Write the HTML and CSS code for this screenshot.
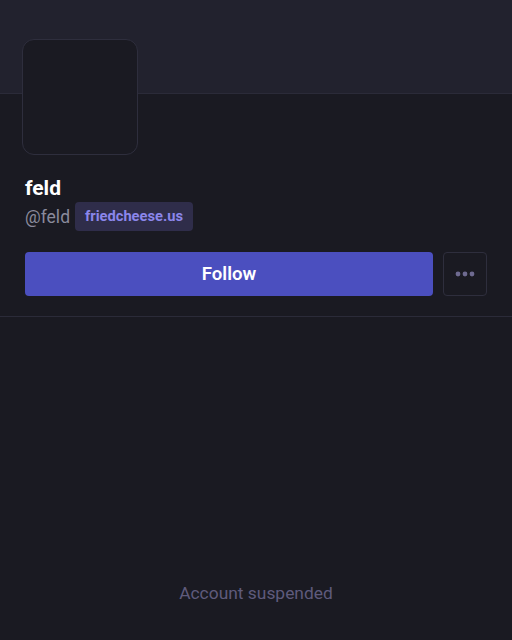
FILE: index.html
```html
<!DOCTYPE html>
<html>
<head>
<meta charset="utf-8">
<link rel="stylesheet" href="styles.css">
</head>
<body>
<div class="banner"></div>
<section class="profile">
  <div class="avatar"></div>
  <h1 class="name">feld</h1>
  <div class="handle-row">
    <span class="handle">@feld</span>
    <span class="badge">friedcheese.us</span>
  </div>
  <div class="actions">
    <button class="follow">Follow</button>
    <button class="more" aria-label="More">
      <svg width="20" height="6" viewBox="0 0 20 6"><circle cx="3" cy="3" r="2.4"/><circle cx="10" cy="3" r="2.4"/><circle cx="17" cy="3" r="2.4"/></svg>
    </button>
  </div>
</section>
<div class="suspended">Account suspended</div>
</body>
</html>
```
FILE: styles.css
```css
html, body {
  margin: 0;
  padding: 0;
  background: #1a1a22;
  font-family: Roboto, "Liberation Sans", sans-serif;
}
.banner {
  height: 93px;
  background: #22222e;
  border-bottom: 1px solid #2b2b39;
}
.profile {
  padding: 0 25px 20px 25px;
  border-bottom: 1px solid #2b2b39;
}
.avatar {
  width: 114px;
  height: 114px;
  margin-top: -55px;
  margin-left: -3px;
  border: 1px solid #2e2e3d;
  border-radius: 12px;
  background: #1a1a22;
}
.name {
  margin: 21px 0 0 0;
  font-size: 21px;
  line-height: 25px;
  font-weight: 700;
  color: #ffffff;
}
.handle-row {
  display: flex;
  align-items: center;
  gap: 5px;
  margin-top: 1px;
}
.handle {
  font-size: 17.5px;
  color: #8a8a9c;
}
.badge {
  background: #2f2d4a;
  color: #8b86ea;
  font-size: 14.7px;
  font-weight: 700;
  padding: 6px 10px;
  line-height: 17px;
  border-radius: 4px;
}
.actions {
  display: flex;
  gap: 10px;
  margin-top: 21px;
}
.follow {
  flex: 1;
  height: 44px;
  border: none;
  border-radius: 4px;
  background: #4b4fbf;
  color: #ffffff;
  font-family: inherit;
  font-size: 18.6px;
  font-weight: 600;
  cursor: pointer;
}
.more {
  width: 44px;
  height: 44px;
  border: 1px solid #2e2e3d;
  border-radius: 4px;
  background: transparent;
  display: flex;
  align-items: center;
  justify-content: center;
  padding: 0;
}
.more svg {
  fill: #6e6a90;
}
.suspended {
  margin-top: 266px;
  text-align: center;
  font-size: 17.4px;
  line-height: 20px;
  color: #5f5b7c;
}
```
